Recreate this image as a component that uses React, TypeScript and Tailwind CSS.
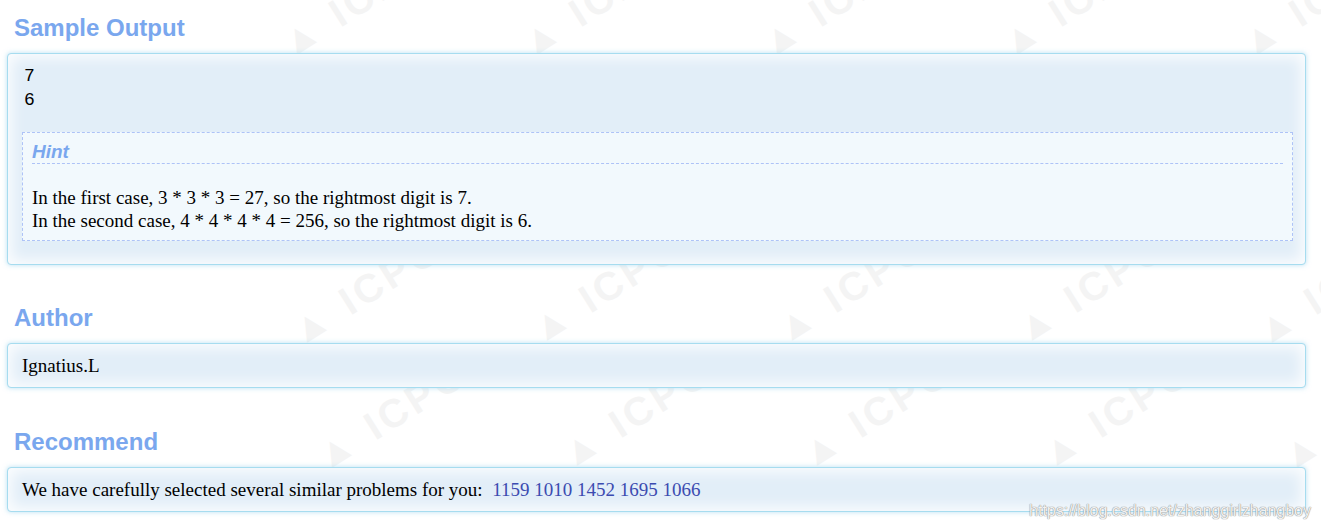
import React from "react";

// 背景浮水印位置（ICPC 斜字）
const WATERMARKS = [
  "left-[270px] top-[-18px]",
  "left-[510px] top-[-18px]",
  "left-[750px] top-[-18px]",
  "left-[990px] top-[-18px]",
  "left-[1230px] top-[-18px]",
  "left-[280px] top-[270px]",
  "left-[520px] top-[268px]",
  "left-[765px] top-[268px]",
  "left-[1005px] top-[268px]",
  "left-[1245px] top-[270px]",
  "left-[305px] top-[395px]",
  "left-[550px] top-[393px]",
  "left-[790px] top-[393px]",
  "left-[1030px] top-[393px]",
  "left-[1270px] top-[395px]",
];

const headingCls =
  "relative z-10 ml-[14px] font-['Liberation_Sans',Arial,sans-serif] text-[24px] leading-[28px] font-bold text-[#7aa7ee]";

const panelCls =
  "relative z-10 ml-[7px] w-[1299px] rounded-[4px] border border-[#a6dcef] bg-[#e2eef8] shadow-[0_0_5px_rgba(140,205,235,0.6),inset_0_0_14px_4px_rgba(255,255,255,0.85)]";

const serifCls =
  "font-['Liberation_Serif','Times_New_Roman',serif] text-[19px] leading-[23px] text-black";

const Section = ({
  title,
  gapCls,
  children,
}: {
  title: string;
  gapCls: string;
  children: React.ReactNode;
}) => (
  <section className={gapCls}>
    <h2 className={`${headingCls} mb-[11px]`}>{title}</h2>
    {children}
  </section>
);

export default function App() {
  const recommends = ["1159", "1010", "1452", "1695", "1066"];

  return (
    <div className="relative w-[1321px] h-[529px] overflow-hidden bg-white pt-[14px]">
      {/* 浮水印 */}
      {WATERMARKS.map((pos, i) => (
        <div
          key={i}
          className={`pointer-events-none absolute ${pos} z-0 -rotate-[32deg] font-['Liberation_Sans',Arial,sans-serif] font-bold text-[40px] leading-none tracking-[4px] whitespace-pre text-[#f4f4f4] select-none`}
        >
          {"▲ ICPC"}
        </div>
      ))}

      <Section title="Sample Output" gapCls="">
        <div className={`${panelCls} pt-[10px] pb-[23px] pl-[14px] pr-[12px]`}>
          <pre className="m-0 ml-[2px] font-['Liberation_Mono','Courier_New',monospace] text-[18px] leading-[24px] text-black">
            {"7\n6"}
          </pre>
          <div className="mt-[20px] border border-dashed border-[#aec3f7] bg-[#f2f9fd] px-[9px] pt-[8px] pb-[8px]">
            <div className="border-b border-dashed border-[#aec3f7] font-['Liberation_Sans',Arial,sans-serif] text-[19px] leading-[22px] font-bold italic text-[#7aa7ee]">
              Hint
            </div>
            <div className="mt-[22px] font-['Liberation_Serif','Times_New_Roman',serif] text-[19px] leading-[23px] text-black">
              <div>In the first case, 3 * 3 * 3 = 27, so the rightmost digit is 7.</div>
              <div>In the second case, 4 * 4 * 4 * 4 = 256, so the rightmost digit is 6.</div>
            </div>
          </div>
        </div>
      </Section>

      <Section title="Author" gapCls="mt-[39px]">
        <div className={`${panelCls} py-[10px] pl-[14px]`}>
          <div className={serifCls}>Ignatius.L</div>
        </div>
      </Section>

      <Section title="Recommend" gapCls="mt-[40px]">
        <div className={`${panelCls} py-[10px] pl-[14px]`}>
          <div className={serifCls}>
            We have carefully selected several similar problems for you:{"\u00a0\u00a0"}
            {recommends.map((id, i) => (
              <React.Fragment key={id}>
                <a className="text-[#3b4bb0]">{id}</a>
                {i < recommends.length - 1 ? " " : ""}
              </React.Fragment>
            ))}
          </div>
        </div>
      </Section>

      {/* CSDN 浮水印 */}
      <div className="pointer-events-none absolute right-[10px] top-[501px] z-20 font-['Liberation_Sans',Arial,sans-serif] text-[16px] leading-[20px] text-[#f2f2f2] [text-shadow:0_0_1px_#8a8a8a,0_0_1px_#8a8a8a]">
        https://blog.csdn.net/zhanggirlzhangboy
      </div>
    </div>
  );
}
